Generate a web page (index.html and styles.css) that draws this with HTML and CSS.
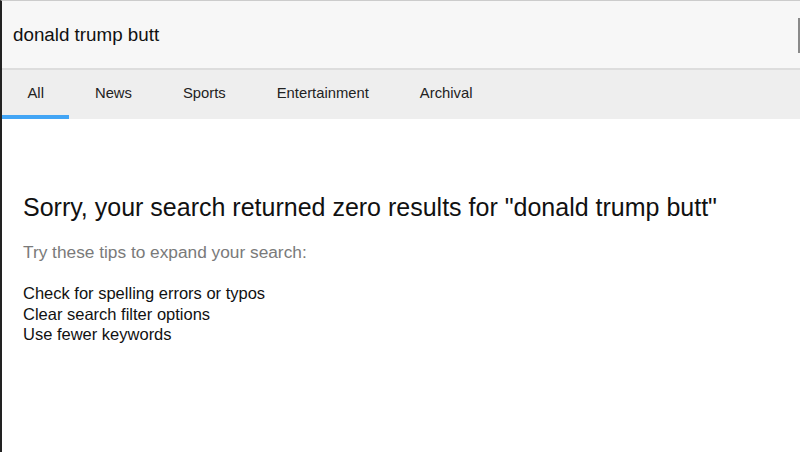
FILE: index.html
```html
<!DOCTYPE html>
<html lang="en">
<head>
  <meta charset="utf-8">
  <title>Search</title>
  <link rel="stylesheet" href="styles.css">
</head>
<body>
<main class="page">
  <header class="search">
    <div class="search-query">donald trump butt</div>
    <div class="search-caret"></div>
  </header>
  <nav class="tabs">
    <a class="tab active" href="#">All</a>
    <a class="tab" href="#">News</a>
    <a class="tab" href="#">Sports</a>
    <a class="tab" href="#">Entertainment</a>
    <a class="tab" href="#">Archival</a>
  </nav>
  <section class="empty">
    <h1>Sorry, your search returned zero results for "donald trump butt"</h1>
    <p class="tips-title">Try these tips to expand your search:</p>
    <ul class="tips">
      <li>Check for spelling errors or typos</li>
      <li>Clear search filter options</li>
      <li>Use fewer keywords</li>
    </ul>
  </section>
</main>
</body>
</html>
```

FILE: styles.css
```css
html {
  box-sizing: border-box;
}

*, *:before, *:after {
  box-sizing: inherit;
}

body {
  margin: 0;
  font-family: 'Liberation Sans', Arial, sans-serif;
  color: #111;
  background: #fff;
}

.page {
  height: 452px;
  border-left: 2px solid #222;
  border-top: 1px solid #ccc;
  overflow: hidden;
}

.search {
  display: flex;
  align-items: center;
  justify-content: space-between;
  height: 69px;
  background: #f7f7f7;
  border-bottom: 2px solid #ddd;
  padding-left: 11px;
}

.search-query {
  font-size: 18.8px;
  padding-top: 1px;
}

.search-caret {
  width: 2px;
  height: 35px;
  background: #8a8a8a;
  margin-top: 2px;
}

.tabs {
  display: flex;
  height: 49px;
  background: #eee;
}

.tab {
  display: flex;
  align-items: center;
  padding: 0 25.5px;
  font-size: 14.8px;
  color: #222;
  text-decoration: none;
  border-bottom: 4px solid transparent;
}

.tab.active {
  border-bottom-color: #42a5f5;
}

.empty {
  padding: 74px 21px 0;
}

h1 {
  margin: 0;
  font-size: 25px;
  font-weight: normal;
  color: #111;
}

.tips-title {
  margin: 20px 0 0;
  font-size: 17.3px;
  font-weight: 300;
  color: #7a7a7a;
}

.tips {
  list-style: none;
  margin: 20px 0 0;
  padding: 0;
  font-size: 16.5px;
  line-height: 20.5px;
}
```
